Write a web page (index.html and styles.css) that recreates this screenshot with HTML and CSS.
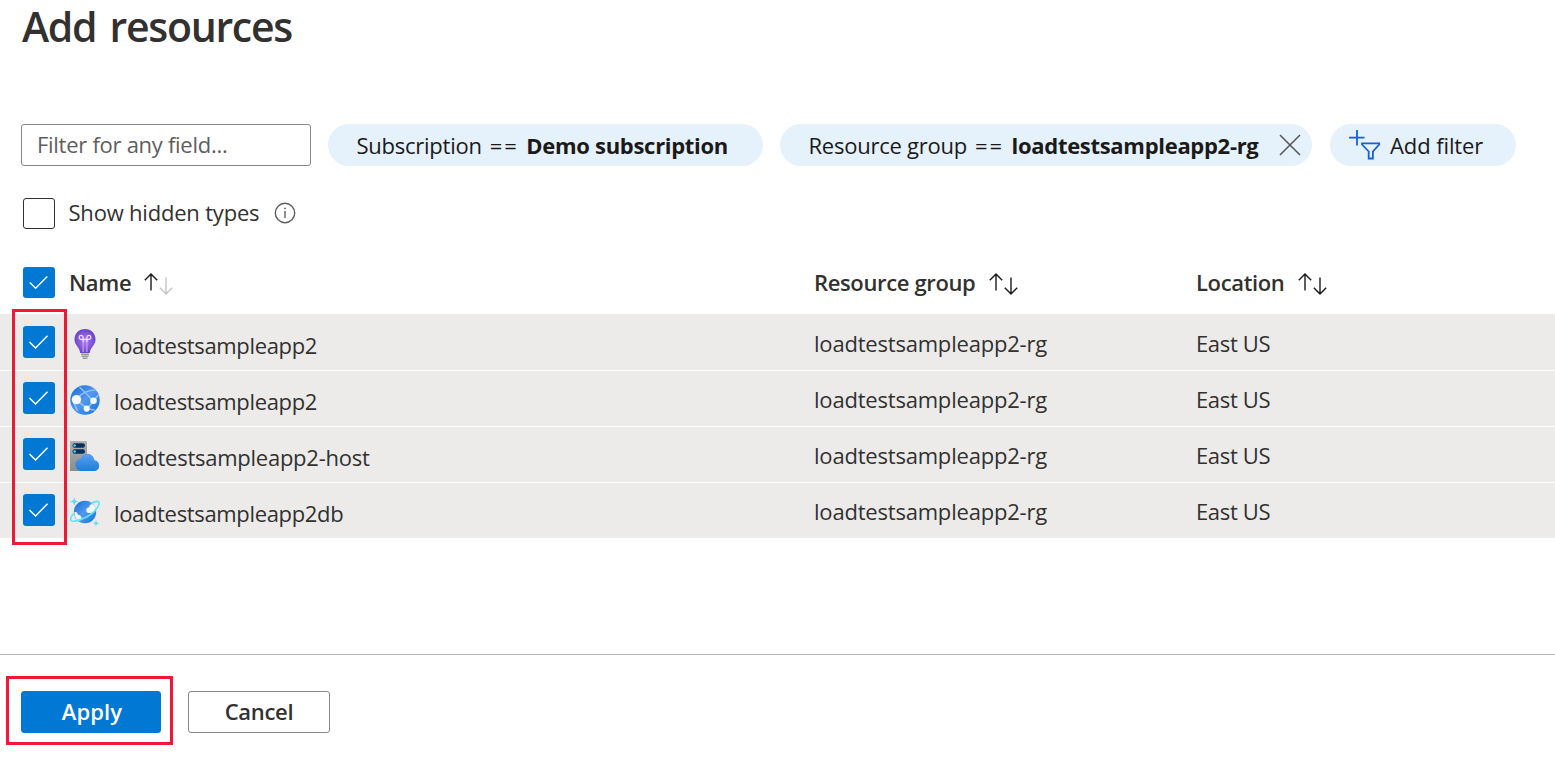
FILE: index.html
```
<!DOCTYPE html>
<html lang="en">
<head>
<meta charset="utf-8">
<title>Add resources</title>
<link rel="stylesheet" href="styles.css">
</head>
<body>
<svg class="defs" width="0" height="0" aria-hidden="true">
  <defs>
    <linearGradient id="web" x1="0" y1="0" x2="1" y2="1"><stop offset="0" stop-color="#0f6fd0"/><stop offset=".5" stop-color="#5497ef"/><stop offset="1" stop-color="#0b72d4"/></linearGradient>
    <radialGradient id="bulb"><stop offset="0" stop-color="#b27cf5"/><stop offset="1" stop-color="#6a45c8"/></radialGradient>
    <linearGradient id="cloud" x1="0" y1="0" x2="0" y2="1"><stop offset="0" stop-color="#5d9ff2"/><stop offset="1" stop-color="#1680dc"/></linearGradient>
    <linearGradient id="server" x1="0" y1="0" x2="0" y2="1"><stop offset="0" stop-color="#b0b0b0"/><stop offset="1" stop-color="#8d8d8d"/></linearGradient>
    <symbol id="check" viewBox="0 0 32 32"><path d="M6.500 16 12.500 22 24.500 9.700" fill="none" stroke="#fff" stroke-width="1.500"/></symbol>
    <symbol id="up" viewBox="0 0 14 18"><path d="M7 17.500V1M.8 7.300 7 1.100l6.200 6.200" fill="none" stroke="currentColor" stroke-width="1.400"/></symbol>
    <symbol id="down" viewBox="0 0 14 18"><path d="M7 .500V17M.8 10.700 7 16.900l6.200-6.200" fill="none" stroke="currentColor" stroke-width="1.400"/></symbol>
  </defs>
</svg>

<h1 class="title">Add resources</h1>

<div class="filters">
  <input class="search" type="text" placeholder="Filter for any field..." aria-label="Filter">
  <div class="pill pill-sub"><span>Subscription</span><span class="eq">==</span><b>Demo subscription</b></div>
  <div class="pill pill-group"><span>Resource group</span><span class="eq">==</span><b>loadtestsampleapp2-rg</b>
    <svg class="close" width="22" height="22" viewBox="0 0 22 22"><path d="M1 1l20 20M21 1 1 21" stroke="#5a5957" stroke-width="1.600"/></svg>
  </div>
  <div class="pill pill-add">
    <svg width="32" height="30" viewBox="0 0 32 30" fill="none" stroke="#1560dd" stroke-width="1.800"><path d="M8 0v15.500M0 7.700h15.500"/><path d="M13 13.300h17.200v1.200l-6.300 7v7h-4.200v-7l-6.700-7z"/></svg>
    <span class="add-text">Add filter</span>
  </div>
</div>

<div class="hidden-types">
  <span class="box"></span><span class="hidden-label">Show hidden types</span>
  <svg class="info" width="22" height="22" viewBox="0 0 22 22"><circle cx="11" cy="11" r="9.700" fill="none" stroke="#605e5c" stroke-width="1.400"/><path d="M11 9v7" stroke="#605e5c" stroke-width="1.400"/><circle cx="11" cy="6.400" r=".9" fill="#605e5c"/></svg>
</div>

<div class="table">
  <div class="head grid">
    <svg class="checked"><use href="#check"/></svg>
    <div class="th th-name">Name<span class="sort"><svg><use href="#up"/></svg><svg class="off"><use href="#down"/></svg></span></div>
    <div class="th">Resource group<span class="sort"><svg><use href="#up"/></svg><svg><use href="#down"/></svg></span></div>
    <div class="th">Location<span class="sort"><svg><use href="#up"/></svg><svg><use href="#down"/></svg></span></div>
  </div>
  <div class="rows">
    <div class="row grid">
      <svg class="checked"><use href="#check"/></svg>
      <div class="name">
        <svg width="30" height="30" viewBox="0 0 30 30"><path d="M15 0C8.800 0 4.500 4.600 4.500 10.400c0 5.600 5.200 7.600 5.700 13.600h9.600c.5-6 5.700-8 5.700-13.600C25.500 4.600 21.200 0 15 0z" fill="url(#bulb)"/><path d="M13.100 23V10.300M16.900 10.300V23" fill="none" stroke="#c9a8f8" stroke-width="1.100"/><path d="M13.100 13v-2.700h-2.600a2 2 0 1 1 2.600-2v2h3.800v-2a2 2 0 1 1 2.600 2h-2.600V13" fill="none" stroke="#f0e6ff" stroke-width="1.200"/><path d="M11 24.500h8v1.400h-8zM11.500 26.600h7V28h-7zM12.500 28.600h5v1.400h-5z" fill="#999"/></svg>
        <span>loadtestsampleapp2</span>
      </div>
      <div class="group">loadtestsampleapp2-rg</div><div class="location">East US</div>
    </div>
    <div class="row grid">
      <svg class="checked"><use href="#check"/></svg>
      <div class="name">
        <svg width="30" height="30" viewBox="0 0 30 30"><circle cx="15" cy="15" r="14.700" fill="url(#web)"/><g fill="none" stroke="#8fbcf6" stroke-width="1.700"><path d="M9.500 2Q16 8 22.500 15.500M25.500 5Q15 5 7.500 13M6.500 15 17 23.500l6.500-7.500M23 16l5.500-6M3.500 17l4 9M17 24l8 1"/></g><g fill="#f5f8fd"><circle cx="6.500" cy="14.600" r="4.700"/><circle cx="23.500" cy="15.800" r="3.300"/><circle cx="16.700" cy="23.600" r="3.100"/></g></svg>
        <span>loadtestsampleapp2</span>
      </div>
      <div class="group">loadtestsampleapp2-rg</div><div class="location">East US</div>
    </div>
    <div class="row grid">
      <svg class="checked"><use href="#check"/></svg>
      <div class="name">
        <svg width="30" height="30" viewBox="0 0 30 30"><path d="M0 0h17v30H0z" fill="url(#server)"/><rect x="2.500" y="2.300" width="12.500" height="4.500" rx="2.200" fill="#07305f"/><rect x="2.500" y="8.300" width="12.500" height="4.500" rx="2.200" fill="#07305f"/><circle cx="4.600" cy="4.550" r="1.300" fill="#50d6f2"/><circle cx="4.600" cy="10.550" r="1.300" fill="#50d6f2"/><path d="M24.500 19.300C24 15.500 21 12.700 17.500 12.700c-3.200 0-5.700 2-6.600 5C7.700 18 5.300 20.500 5.300 23.700c0 3.500 2.800 6.300 6.500 6.300h12c3.200 0 5.400-2.300 5.400-5.300 0-3-2-5.200-4.700-5.400z" fill="url(#cloud)"/></svg>
        <span class="host">loadtestsampleapp2-host</span>
      </div>
      <div class="group">loadtestsampleapp2-rg</div><div class="location">East US</div>
    </div>
    <div class="row grid">
      <svg class="checked"><use href="#check"/></svg>
      <div class="name">
        <svg width="30" height="30" viewBox="0 0 30 30"><circle cx="15" cy="15" r="11.200" fill="url(#web)"/><g fill="#f2f5fa"><path d="M16.200 13.500c.1-2.300 1.500-3.300 3-3.200 0-2 1.500-3.500 3.300-3.400 2.200 2 3.300 3.500 3.500 6-2 2.500-4.200 3.600-6.300 3.100-1.800.4-3.500-.7-3.500-2.500zM4.300 15.300c2-.8 3.500.4 3.500 2.500 2 .1 3.800 1.500 3.800 3.300 0 1.700-1.300 2.900-3 2.800-2.600-2-4.400-5-4.300-8.600z"/></g><path d="M21 6.200c4.300-2 7.200-2.400 7.900-.9 1 2-1.800 7.500-8 12C13.700 22.500 3.500 25.700 1.200 23.500c-1.400-1.500 0-4.300 3.100-7.500" fill="none" stroke="#5de3fa" stroke-width="1.700"/><path d="M4.200.500 5.200 3.500 8.200 4.500 5.200 5.500 4.200 8.500 3.200 5.500.2 4.500 3.200 3.500zM26 23l.8 2.500 2.500.8-2.500.8L26 29.600l-.8-2.500-2.500-.8 2.500-.8z" fill="#50dcf5"/></svg>
        <span>loadtestsampleapp2db</span>
      </div>
      <div class="group">loadtestsampleapp2-rg</div><div class="location">East US</div>
    </div>
    <div class="callout rows-callout"></div>
  </div>
</div>

<div class="footer">
  <div class="apply-wrap"><button class="btn primary">Apply</button><div class="callout apply-callout"></div></div>
  <button class="btn cancel">Cancel</button>
</div>
</body>
</html>
```
FILE: styles.css
```
* { box-sizing: border-box; }
body {
  margin: 0;
  min-height: 100vh;
  background: #fff;
  color: #323130;
  font: 22px/30px "Open Sans", sans-serif;
  letter-spacing: -0.25px;
  white-space: nowrap;
}
svg { display: block; flex: none; }
.defs { position: absolute; }
.title {
  margin: 0;
  padding-left: 22px;
  height: 124px;
  font-size: 41px;
  line-height: 52px;
  font-weight: 550;
  letter-spacing: -1.3px;
  word-spacing: 4px;
}

.filters { display: flex; height: 42px; padding-left: 21px; }
.search {
  width: 290px;
  height: 42px;
  margin-right: 17px;
  padding: 0 15px 2px;
  border: 1px solid #8a8886;
  border-radius: 3px;
  font: inherit;
  letter-spacing: -0.28px;
}
.search::placeholder { color: #605e5c; opacity: 1; }
.pill {
  display: flex;
  align-items: center;
  height: 42px;
  border-radius: 21px;
  background: #e5f1fb;
  color: #1b1a19;
}
.pill span, .pill b { padding-bottom: 1px; }
.pill-sub { width: 435px; padding-left: 28.500px; margin-right: 17px; }
.pill-group { width: 532px; padding-left: 28.500px; margin-right: 18px; }
.pill-add { width: 186px; padding-left: 19px; }
.pill-add svg { margin-top: -1px; }
.add-text { margin-left: 9px; letter-spacing: -0.1px; }
.eq { margin: 0 7.500px 0 8px; letter-spacing: 2px; }
.pill b { letter-spacing: -0.3px; }
.close { margin-left: 20px; }

.hidden-types { display: flex; align-items: center; height: 31px; margin-top: 32px; padding-left: 23px; }
.box { width: 32px; height: 31px; border: 1px solid #323130; border-radius: 3px; }
.hidden-label { margin: 0 15px 0 13.500px; padding-bottom: 3px; letter-spacing: -0.2px; }
.info { margin-top: -1px; }

.table { margin-top: 38px; }
.grid { display: grid; grid-template-columns: 46px 745px 382px 1fr; padding-left: 23px; }
.checked { width: 32px; height: 32px; border-radius: 3px; background: #0078d4; }
.head { height: 47px; }
.head .checked { height: 31px; }
.th { display: flex; height: 29px; align-items: center; font-weight: 550; letter-spacing: -0.36px; }
.sort { display: flex; align-items: center; gap: 1px; margin-left: 14px; color: #1b1a19; }
.th-name .sort { margin-left: 12.500px; }
.sort svg { width: 14px; height: 18px; }
.sort svg + svg { margin-top: 8px; }
.sort .off { color: #c8c6c4; }

.rows { position: relative; }
.row { height: 56px; padding-top: 12px; background: #ecebea; }
.row + .row { padding-top: 11px; border-top: 1px solid #fff; }
.name { display: flex; height: 36px; align-items: center; letter-spacing: -0.34px; }
.name svg { margin: 0 14px 0 1px; }
.name span { padding-top: 2px; }
.name .host { letter-spacing: -0.25px; }
.group, .location { height: 36px; line-height: 34px; letter-spacing: -0.2px; }
.location { letter-spacing: -0.35px; }

.callout { position: absolute; border: 3px solid #f01935; pointer-events: none; }
.rows-callout { left: 12px; top: -5px; width: 55px; height: 236px; }

.footer {
  display: flex;
  gap: 27px;
  margin-top: 116px;
  padding: 36px 0 25px 21px;
  border-top: 1px solid #b8b7b6;
}
.apply-wrap { position: relative; }
.apply-callout { inset: -15px -12px -12px -15px; }
.btn {
  display: block;
  height: 42px;
  padding: 0 0 2px;
  border-radius: 3px;
  font: 550 22px/38px "Open Sans", sans-serif;
  letter-spacing: -0.3px;
}
.primary { width: 140px; padding-left: 2px; border: 1px solid #0078d4; background: #0078d4; color: #fff; font-weight: 600; letter-spacing: 0.1px; }
.cancel { width: 142px; border: 1px solid #8a8886; background: #fff; color: #323130; }
```
